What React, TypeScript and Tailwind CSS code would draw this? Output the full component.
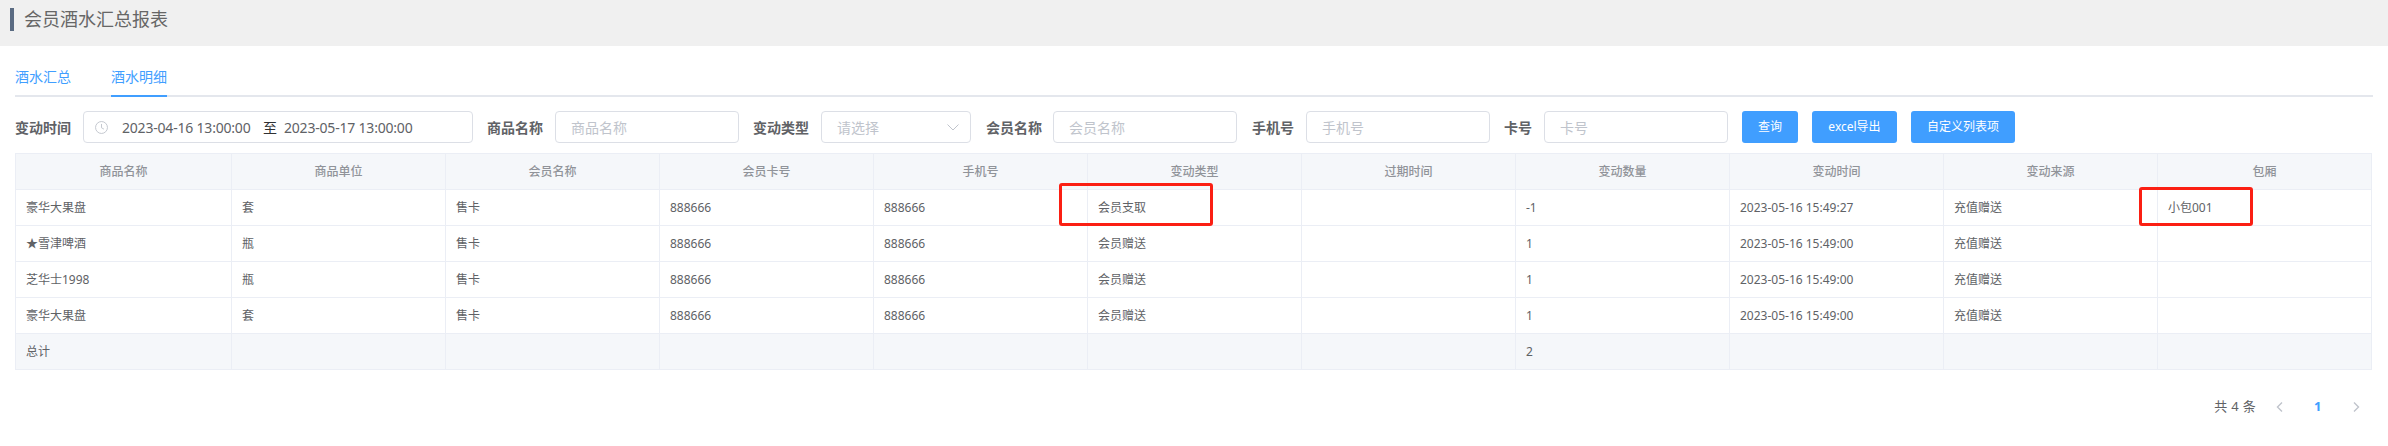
import React from "react";

const font = { fontFamily: '"Noto Sans", "Noto Sans CJK SC", sans-serif' };

const headers = ["商品名称", "商品单位", "会员名称", "会员卡号", "手机号", "变动类型", "过期时间", "变动数量", "变动时间", "变动来源", "包厢"];
const rows = [
  ["豪华大果盘", "套", "售卡", "888666", "888666", "会员支取", "", "-1", "2023-05-16 15:49:27", "充值赠送", "小包001"],
  ["★雪津啤酒", "瓶", "售卡", "888666", "888666", "会员赠送", "", "1", "2023-05-16 15:49:00", "充值赠送", ""],
  ["芝华士1998", "瓶", "售卡", "888666", "888666", "会员赠送", "", "1", "2023-05-16 15:49:00", "充值赠送", ""],
  ["豪华大果盘", "套", "售卡", "888666", "888666", "会员赠送", "", "1", "2023-05-16 15:49:00", "充值赠送", ""],
];
const footer = ["总计", "", "", "", "", "", "", "2", "", "", ""];

function Label({ children, className }: { children: React.ReactNode; className?: string }) {
  return <span className={`text-[14px] font-semibold text-[#606266] whitespace-nowrap ${className ?? ""}`}>{children}</span>;
}

function Input({ placeholder, className }: { placeholder: string; className: string }) {
  return (
    <div className={`h-8 flex items-center pl-[15px] border border-[#dcdfe6] rounded text-[14px] text-[#c0c4cc] bg-white ${className}`}>
      {placeholder}
    </div>
  );
}

function Button({ children, className }: { children: React.ReactNode; className: string }) {
  return (
    <div className={`h-8 flex items-center justify-center bg-[#409eff] rounded-[3px] text-white text-[12px] ${className}`}>
      {children}
    </div>
  );
}

export default function App() {
  return (
    <div className="w-[2388px] h-[446px] bg-white overflow-hidden" style={font}>
      <div className="h-[46px] bg-[#f0f0f0] flex items-start pt-2 pl-[10px]">
        <div className="w-1 h-[23px] bg-[#5a6b82]" />
        <div className="ml-[10px] text-[18px] leading-[22px] text-[#666666] whitespace-nowrap">会员酒水汇总报表</div>
      </div>

      <div className="px-[15px]">
        <div className="mt-[19px] h-8 border-b-2 border-[#e4e7ed] flex text-[14px] text-[#409eff]">
          <div className="h-8 leading-6 whitespace-nowrap">酒水汇总</div>
          <div className="h-8 leading-6 ml-[40px] border-b-2 border-[#409eff] whitespace-nowrap">酒水明细</div>
        </div>

        <div className="mt-[14px] flex items-center">
          <Label>变动时间</Label>
          <div className="ml-[12px] w-[390px] h-8 flex items-center border border-[#dcdfe6] rounded text-[14px] text-[#606266]">
            <svg className="ml-[11px] w-[13px] h-[13px] shrink-0" viewBox="0 0 24 24" fill="none" stroke="#c0c4cc" strokeWidth="1.7">
              <circle cx="12" cy="12" r="11" />
              <path d="M12 5.5V12.5L16.5 15" />
            </svg>
            <span className="ml-[14px] w-[128px] whitespace-nowrap tracking-[-0.2px]">2023-04-16 13:00:00</span>
            <span className="ml-[13px] w-[14px] text-[#303133]">至</span>
            <span className="ml-[7px] whitespace-nowrap tracking-[-0.2px]">2023-05-17 13:00:00</span>
          </div>
          <Label className="ml-[14px]">商品名称</Label>
          <Input placeholder="商品名称" className="ml-[12px] w-[184px]" />
          <Label className="ml-[14px]">变动类型</Label>
          <div className="ml-[12px] w-[150px] h-8 flex items-center justify-between pl-[15px] pr-[11px] border border-[#dcdfe6] rounded text-[14px] text-[#c0c4cc]">
            <span>请选择</span>
            <svg className="w-[12px] h-[7px]" viewBox="0 0 12 7" fill="none" stroke="#c0c4cc" strokeWidth="1">
              <path d="M0.5 0.5L6 6L11.5 0.5" />
            </svg>
          </div>
          <Label className="ml-[15px]">会员名称</Label>
          <Input placeholder="会员名称" className="ml-[11px] w-[184px]" />
          <Label className="ml-[15px]">手机号</Label>
          <Input placeholder="手机号" className="ml-[12px] w-[184px]" />
          <Label className="ml-[14px]">卡号</Label>
          <Input placeholder="卡号" className="ml-[12px] w-[184px]" />
          <Button className="ml-[14px] w-[56px]">查询</Button>
          <Button className="ml-[14px] w-[85px]">excel导出</Button>
          <Button className="ml-[14px] w-[104px]">自定义列表项</Button>
        </div>

        <div className="relative mt-[10px] w-[2357px]">
          <table className="w-[2357px] table-fixed border-collapse text-[12px] text-[#606266]">
            <colgroup>
              {headers.map((h, i) => (
                <col key={i} className={i === 0 ? "w-[216px]" : "w-[214px]"} />
              ))}
            </colgroup>
            <thead>
              <tr className="h-9 bg-[#f5f7fa]">
                {headers.map((h, i) => (
                  <th key={i} className="border border-[#ebeef5] font-medium text-center text-[#909399]">{h}</th>
                ))}
              </tr>
            </thead>
            <tbody>
              {rows.map((r, i) => (
                <tr key={i} className="h-9">
                  {r.map((c, j) => (
                    <td key={j} className="border border-[#ebeef5] px-[10px]">{c}</td>
                  ))}
                </tr>
              ))}
              <tr className="h-9 bg-[#f5f7fa]">
                {footer.map((c, j) => (
                  <td key={j} className="border border-[#ebeef5] px-[10px]">{c}</td>
                ))}
              </tr>
            </tbody>
          </table>
          <div className="absolute left-[1044px] top-[30px] w-[154px] h-[43px] border-[3px] border-[#fb1f13] rounded-[3px]" />
          <div className="absolute left-[2124px] top-[34px] w-[114px] h-[39px] border-[3px] border-[#fb1f13] rounded-[3px]" />
        </div>

        <div className="mt-[27px] h-5 flex items-center justify-end text-[13px] text-[#606266]">
          <span className="whitespace-nowrap tracking-[0.3px]">共 4 条</span>
          <svg className="ml-[20px] w-[7px] h-[10px]" viewBox="0 0 7 10" fill="none" stroke="#c0c4cc" strokeWidth="1.4">
            <path d="M6 0.5L1.5 5L6 9.5" />
          </svg>
          <span className="ml-[31px] w-[7px] text-center font-bold text-[#409eff]">1</span>
          <svg className="ml-[32px] mr-[13px] w-[7px] h-[10px]" viewBox="0 0 7 10" fill="none" stroke="#c0c4cc" strokeWidth="1.4">
            <path d="M1 0.5L5.5 5L1 9.5" />
          </svg>
        </div>
      </div>
    </div>
  );
}
